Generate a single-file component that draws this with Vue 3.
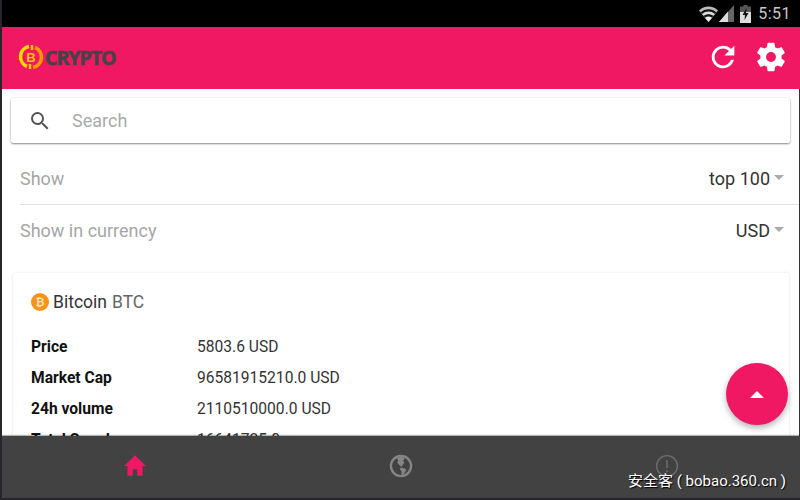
<template>
  <div class="screen">
    <div class="status-bar">
      <svg class="wifi" width="19" height="16" viewBox="0 0 19 16">
        <path d="M9.500 16 0 4.500C2.500 2 6 .5 9.500 .5S16.500 2 19 4.500z" fill="#bbb" />
        <path d="M9.500 16 1.700 6.500C4 4.500 6.500 3.300 9.500 3.300S15 4.500 17.300 6.500z" fill="#111" />
        <path d="M9.500 16 3 8C5 6.300 7 5.500 9.500 5.500S14 6.300 16 8z" fill="#ddd" />
        <path d="M9.500 16 4.500 9.800C6 8.700 7.700 8.200 9.500 8.200S13 8.700 14.500 9.800z" fill="#111" />
        <path d="M9.500 16 6 11.700C7 11 8.200 10.600 9.500 10.600S12 11 13 11.700z" fill="#eee" />
      </svg>
      <svg class="signal" width="15" height="17" viewBox="0 0 15 17">
        <path d="M15 0v17H0z" fill="#666" />
        <path d="M9 6.500V17H0z" fill="#ddd" />
      </svg>
      <svg class="battery" width="11" height="18" viewBox="0 0 11 18">
        <path d="M3.500 0h4v1.500H11V18H0V1.500h3.500z" fill="#555" />
        <path d="M0 7h11v11H0z" fill="#ddd" />
        <path d="M6.500 3 2.500 10h2.500l-.5 5 4-7H6z" fill="#111" />
      </svg>
      <span class="clock">5:51</span>
    </div>

    <header class="toolbar">
      <div class="logo">
        <svg width="26" height="26" viewBox="0 0 26 26">
          <path d="M11 2.500a10.500 10.500 0 0 0-2 20" fill="none" stroke="#ffd600" stroke-width="3.600" />
          <path d="M15 23.500a10.500 10.500 0 0 0 2-20" fill="none" stroke="#ff9800" stroke-width="3.600" />
          <path d="M14 1v5M12 20v5" stroke="#ffc400" stroke-width="2.500" />
          <text x="13" y="17.500" text-anchor="middle" class="logo-b">B</text>
        </svg>
        <span class="logo-text">CRYPTO</span>
      </div>
      <div class="toolbar-actions">
        <svg width="34" height="34" viewBox="0 0 24 24">
          <path fill="#fff" d="M17.650 6.350A7.960 7.960 0 0 0 12 4a8 8 0 1 0 7.730 10h-2.080A6 6 0 1 1 12 6c1.660 0 3.140.69 4.220 1.780L13 11h7V4z" />
        </svg>
        <svg width="34" height="34" viewBox="0 0 24 24">
          <path fill="#fff" d="M19.430 12.980c.04-.32.07-.64.07-.98s-.03-.66-.07-.98l2.110-1.650a.5.500 0 0 0 .12-.64l-2-3.460a.5.500 0 0 0-.61-.22l-2.490 1a7.300 7.300 0 0 0-1.690-.98l-.38-2.650A.49.490 0 0 0 14 2h-4a.49.490 0 0 0-.49.420l-.38 2.650c-.61.25-1.170.59-1.690.98l-2.490-1a.5.500 0 0 0-.61.22l-2 3.460a.49.490 0 0 0 .12.64l2.110 1.650c-.04.32-.07.65-.07.98s.03.66.07.98l-2.110 1.650a.5.500 0 0 0-.12.64l2 3.460c.12.22.39.3.61.22l2.490-1c.52.4 1.080.73 1.690.98l.38 2.650c.03.24.24.42.49.42h4c.25 0 .46-.18.49-.42l.38-2.650c.61-.25 1.170-.59 1.690-.98l2.490 1c.23.09.49 0 .61-.22l2-3.460a.5.500 0 0 0-.12-.64zM12 15.500a3.500 3.500 0 1 1 0-7 3.500 3.500 0 0 1 0 7z" />
        </svg>
      </div>
    </header>

    <main class="content">
      <div class="search">
        <svg width="24" height="24" viewBox="0 0 24 24">
          <path fill="#555" d="M15.500 14h-.79l-.28-.27A6.470 6.470 0 0 0 16 9.500 6.500 6.500 0 1 0 9.500 16c1.610 0 3.090-.59 4.230-1.570l.27.28v.79l5 4.990L20.490 19zm-6 0a4.500 4.500 0 1 1 0-9 4.500 4.500 0 0 1 0 9z" />
        </svg>
        <span class="search-text">Search</span>
      </div>

      <div class="selects">
        <div v-for="row in selects" :key="row.label" class="select-row">
          <span class="select-label">{{ row.label }}</span>
          <span class="select-value">{{ row.value }}<i class="caret"></i></span>
        </div>
      </div>

      <section class="coin-card">
        <div class="coin-title">
          <svg width="18" height="18" viewBox="0 0 18 18">
            <circle cx="9" cy="9" r="9" fill="#f7931a" />
            <text x="9" y="13" text-anchor="middle" class="coin-b">₿</text>
          </svg>
          <span class="coin-name">Bitcoin</span>
          <span class="coin-symbol">BTC</span>
        </div>
        <div v-for="stat in stats" :key="stat.label" class="stat-row">
          <span class="stat-label">{{ stat.label }}</span>
          <span>{{ stat.value }}</span>
        </div>
      </section>

      <button class="fab"><i class="fab-arrow"></i></button>
    </main>

    <nav class="bottom-nav">
      <svg width="26" height="26" viewBox="0 0 24 24">
        <path fill="#f01763" d="M10 21v-6h4v6h5v-9h3L12 2 2 12h3v9z" />
      </svg>
      <svg width="26" height="26" viewBox="0 0 24 24">
        <circle cx="12" cy="12" r="9.300" fill="none" stroke="#858585" stroke-width="2.200" />
        <path fill="#858585" d="M8 4.500C10 3.500 14 3.500 15.500 5L14 7l1 2-1.500 2-1 2-2-2-2-2 1-2z" />
        <path fill="#858585" d="M11.500 13.500 15 14l2 1.500-1.500 2.500-1.500 2.500h-1.500V17L11 15z" />
      </svg>
      <svg width="26" height="26" viewBox="0 0 24 24">
        <circle cx="12" cy="12" r="9.600" fill="none" stroke="#6c6c6c" stroke-width="1.300" />
        <path fill="#6c6c6c" d="M11.300 6.500h1.400V14h-1.400zM11.300 16h1.400v1.600h-1.400z" />
      </svg>
      <span class="watermark">安全客 ( bobao.360.cn )</span>
    </nav>
  </div>
</template>

<script setup>
const selects = [
  { label: "Show", value: "top 100" },
  { label: "Show in currency", value: "USD" }
];

const stats = [
  { label: "Price", value: "5803.6 USD" },
  { label: "Market Cap", value: "96581915210.0 USD" },
  { label: "24h volume", value: "2110510000.0 USD" },
  { label: "Total Supply", value: "16641725.0" }
];
</script>

<style>
html,
body {
  margin: 0;
  overflow: hidden;
  background: #fff;
}
</style>

<style scoped>
.screen {
  box-sizing: border-box;
  width: 800px;
  height: 500px;
  border-left: 2px solid #26262b;
  border-bottom: 2px solid #26262b;
  display: flex;
  flex-direction: column;
  overflow: hidden;
  font-family: Roboto, "Liberation Sans", sans-serif;
  background: #fff;
}

.status-bar {
  height: 27px;
  flex: none;
  background: #000;
  display: flex;
  align-items: center;
  justify-content: flex-end;
  gap: 0;
  padding-right: 9px;
}

.wifi {
  margin-right: 1px;
}

.battery {
  margin-left: 6px;
}

.clock {
  color: #c8c8c8;
  font-size: 16px;
  margin-left: 7px;
  letter-spacing: 0.5px;
}

.toolbar {
  box-sizing: border-box;
  height: 62px;
  flex: none;
  background: #f01763;
  display: flex;
  align-items: center;
  justify-content: space-between;
  padding: 0 12px 2px 16px;
}

.logo {
  display: flex;
  align-items: center;
  gap: 1px;
}

.logo-b {
  font: 700 13px "Liberation Sans", sans-serif;
  fill: #ffc400;
}

.logo-text {
  color: #444;
  font: 700 19.500px "Open Sans", "Liberation Sans", sans-serif;
  letter-spacing: -1px;
  -webkit-text-stroke: 0.6px #444;
}

.toolbar-actions {
  display: flex;
  align-items: center;
  gap: 14px;
}

.content {
  flex: 1;
  min-height: 0;
  position: relative;
  overflow: hidden;
  padding: 9px 9px 0 9px;
  border-right: 1px solid #333;
}

.search {
  height: 45px;
  background: #fff;
  border-radius: 2px;
  box-shadow: 0 1px 2px rgba(0, 0, 0, 0.45), 0 0 3px rgba(0, 0, 0, 0.08);
  display: flex;
  align-items: center;
  padding-left: 17px;
}

.search-text {
  margin-left: 20px;
  color: #aaa;
  font-size: 18px;
}

.selects {
  margin: 10px -9px 0 9px;
}

.select-row {
  height: 52px;
  box-sizing: border-box;
  display: flex;
  align-items: center;
  justify-content: space-between;
  padding-right: 15px;
  font-size: 18px;
}

.select-row:first-child {
  border-bottom: 1px solid #e0e0e0;
}

.select-row:last-child {
  height: 50px;
}

.select-label {
  color: #a6a6a6;
}

.select-value {
  color: #333;
  display: flex;
  align-items: center;
}

.caret {
  margin-left: 4px;
  width: 0;
  height: 0;
  border-left: 5.500px solid transparent;
  border-right: 5.500px solid transparent;
  border-top: 5px solid #aaa;
  margin-top: -2px;
}

.coin-card {
  margin: 18px 1px 0 2px;
  padding: 17px 18px 0;
  height: 200px;
  box-sizing: border-box;
  background: #fff;
  border-radius: 2px;
  box-shadow: 0 0 3px rgba(0, 0, 0, 0.12);
}

.coin-title {
  display: flex;
  align-items: center;
  height: 24px;
  margin-bottom: 17px;
  font-size: 17.500px;
}

.coin-b {
  font: 700 11px "DejaVu Sans", sans-serif;
  fill: #ffe3b8;
}

.coin-name {
  color: #333;
  margin-left: 4px;
}

.coin-symbol {
  color: #666;
  margin-left: 5px;
}

.stat-row {
  display: grid;
  grid-template-columns: 166px 1fr;
  align-items: center;
  height: 31px;
  font-size: 15.600px;
  color: #333;
}

.stat-label {
  color: #111;
  font-weight: 700;
}

.fab {
  position: absolute;
  right: 11px;
  bottom: 11px;
  width: 62px;
  height: 62px;
  padding: 0;
  border: 0;
  border-radius: 50%;
  background: #f01763;
  box-shadow: 0 3px 6px rgba(0, 0, 0, 0.3);
  display: flex;
  align-items: center;
  justify-content: center;
}

.fab-arrow {
  width: 0;
  height: 0;
  border-left: 7px solid transparent;
  border-right: 7px solid transparent;
  border-bottom: 7px solid #fff;
}

.bottom-nav {
  box-sizing: border-box;
  height: 62px;
  flex: none;
  position: relative;
  padding-bottom: 2px;
  background: #424242;
  display: grid;
  grid-template-columns: repeat(3, 1fr);
  justify-items: center;
  align-items: center;
  box-shadow: 0 -1px 1px rgba(0, 0, 0, 0.3);
}

.watermark {
  position: absolute;
  right: 14px;
  bottom: 8px;
  color: #fff;
  font: 15px Roboto, "Noto Sans CJK SC", sans-serif;
  text-shadow: 1px 1px 1px #000;
}
</style>
